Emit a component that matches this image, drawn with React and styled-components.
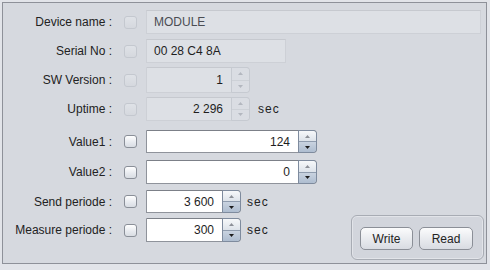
import React from "react";
import styled, { createGlobalStyle } from "styled-components";

const GlobalStyle = createGlobalStyle`
  html, body {
    margin: 0;
    padding: 0;
    background: #e2e4e9;
    font-family: "Liberation Sans", Arial, sans-serif;
  }
`;

const Frame = styled.div`
  width: 490px;
  height: 270px;
  box-sizing: border-box;
  padding: 2px 0 0 2px;
`;

const Panel = styled.div`
  width: 485px;
  height: 262px;
  box-sizing: border-box;
  border: 1px solid #8e9199;
  background: #d6d9df;
  display: flex;
  flex-direction: column;
`;

const Row = styled.div`
  display: flex;
  align-items: center;
  height: ${({ $h }) => $h}px;
  margin-top: ${({ $mt }) => $mt}px;
`;

const Label = styled.div`
  width: 109px;
  text-align: right;
  font-size: 12px;
  color: #222;
  white-space: nowrap;
`;

const Check = styled.div`
  width: 13px;
  height: 13px;
  box-sizing: border-box;
  margin-left: 12px;
  margin-right: 9px;
  border-radius: 3px;
  border: 1px solid ${({ $disabled }) => ($disabled ? "#c4c8cf" : "#8a8f98")};
  background: ${({ $disabled }) =>
    $disabled
      ? "linear-gradient(#dfe2e7, #d5d8de)"
      : "linear-gradient(#ffffff, #e6e9ee 60%, #d9dde3)"};
`;

const Field = styled.div`
  display: flex;
  height: 100%;
  width: ${({ $w }) => $w}px;
  box-sizing: border-box;
  border: 1px solid ${({ $disabled }) => ($disabled ? "#cdd0d6" : "#8f939b")};
  border-top-color: ${({ $disabled }) => ($disabled ? "#c6c9cf" : "#7c8088")};
  background: ${({ $disabled }) => ($disabled ? "#dde0e5" : "#ffffff")};
  border-radius: ${({ $spin }) => ($spin ? "0 4px 4px 0" : "0")};
`;

const Value = styled.div`
  flex: 1;
  display: flex;
  align-items: center;
  justify-content: ${({ $right }) => ($right ? "flex-end" : "flex-start")};
  padding: ${({ $right }) => ($right ? "0 8px 0 0" : "0 0 0 7px")};
  font-size: 12px;
  color: ${({ $muted }) => ($muted ? "#4a4d53" : "#1e1e1e")};
`;

const Spin = styled.div`
  width: 17px;
  display: flex;
  flex-direction: column;
  margin: -1px -1px -1px 0;
  border: 1px solid ${({ $disabled }) => ($disabled ? "#c6cad1" : "#7e8b9e")};
  border-radius: 0 4px 4px 0;
  overflow: hidden;
`;

const SpinHalf = styled.div`
  flex: 1;
  display: flex;
  align-items: center;
  justify-content: center;
  background: ${({ $disabled, $down }) =>
    $disabled
      ? "#dadde3"
      : $down
      ? "linear-gradient(#c9d3e0, #aebdd0)"
      : "linear-gradient(#f6f8fa, #dde3ea)"};
  border-top: ${({ $down, $disabled }) =>
    $down ? `1px solid ${$disabled ? "#cdd1d7" : "#8f9cae"}` : "none"};
`;

const Unit = styled.span`
  margin-left: ${({ $ml }) => $ml}px;
  font-size: 12px;
  letter-spacing: 1px;
  color: #222;
`;

const Bottom = styled.div`
  display: flex;
  margin-top: 6px;
`;

const Stack = styled.div`
  display: flex;
  flex-direction: column;
`;

const Group = styled.div`
  margin: 25px 2px 0 auto;
  width: 133px;
  height: 45px;
  box-sizing: border-box;
  border: 1px solid #a8acb4;
  border-radius: 6px;
  background: #d2d5dc;
  box-shadow: inset 0 0 0 1px #e2e4e9;
  display: flex;
  align-items: center;
  padding: 2px 0 0 8px;
  gap: 6px;
`;

const Button = styled.button`
  width: ${({ $w }) => $w}px;
  height: 23px;
  border: 1px solid #8b8f97;
  border-radius: 5px;
  background: linear-gradient(#fbfbfc, #e9ebef 50%, #d9dce2);
  font-family: "Liberation Sans", Arial, sans-serif;
  font-size: 12px;
  color: #222;
  padding: 0;
`;

const Arrow = ({ down, disabled }) => (
  <svg width="5" height="3" viewBox="0 0 5 3">
    <path
      d={down ? "M0 0 L5 0 L2.5 3 Z" : "M0 3 L5 3 L2.5 0 Z"}
      fill={disabled ? "#b3b7bf" : down ? "#1c1c1c" : "#8c9098"}
    />
  </svg>
);

const Spinner = ({ w, value, disabled }) => (
  <Field $w={w} $disabled={disabled} $spin>
    <Value $right>{value}</Value>
    <Spin $disabled={disabled}>
      <SpinHalf $disabled={disabled}>
        <Arrow disabled={disabled} />
      </SpinHalf>
      <SpinHalf $down $disabled={disabled}>
        <Arrow down disabled={disabled} />
      </SpinHalf>
    </Spin>
  </Field>
);

export default function App() {
  return (
    <Frame>
      <GlobalStyle />
      <Panel>
        <Row $mt={7} $h={24}>
          <Label>Device name :</Label>
          <Check $disabled />
          <Field $w={335} $disabled>
            <Value $muted>MODULE</Value>
          </Field>
        </Row>
        <Row $mt={5} $h={24}>
          <Label>Serial No :</Label>
          <Check $disabled />
          <Field $w={140} $disabled>
            <Value>00 28 C4 8A</Value>
          </Field>
        </Row>
        <Row $mt={4} $h={26}>
          <Label>SW Version :</Label>
          <Check $disabled />
          <Spinner w={104} value="1" disabled />
        </Row>
        <Row $mt={4} $h={24}>
          <Label>Uptime :</Label>
          <Check $disabled />
          <Spinner w={104} value="2 296" disabled />
          <Unit $ml={8}>sec</Unit>
        </Row>
        <Row $mt={9} $h={23}>
          <Label>Value1 :</Label>
          <Check />
          <Spinner w={171} value="124" />
        </Row>
        <Row $mt={7} $h={24}>
          <Label>Value2 :</Label>
          <Check />
          <Spinner w={171} value="0" />
        </Row>
        <Bottom>
          <Stack>
            <Row $mt={0} $h={23}>
              <Label>Send periode :</Label>
              <Check />
              <Spinner w={95} value="3 600" />
              <Unit $ml={6}>sec</Unit>
            </Row>
            <Row $mt={5} $h={24}>
              <Label>Measure periode :</Label>
              <Check />
              <Spinner w={95} value="300" />
              <Unit $ml={6}>sec</Unit>
            </Row>
          </Stack>
          <Group>
            <Button $w={53}>Write</Button>
            <Button $w={54}>Read</Button>
          </Group>
        </Bottom>
      </Panel>
    </Frame>
  );
}
